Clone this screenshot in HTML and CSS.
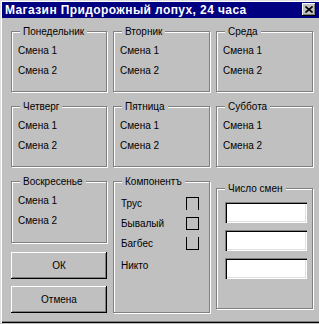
FILE: index.html
```html
<!DOCTYPE html>
<html lang="ru">
<head>
    <meta charset="UTF-8">
    <title>Магазин Придорожный лопух, 24 часа</title>
    <link rel="stylesheet" href="styles.css">
</head>
<body>
    <div class="window">
        <div class="titlebar">
            <span class="title">Магазин Придорожный лопух, 24 часа</span>
            <button class="close">
                <svg width="8" height="7" viewBox="0 0 8 7">
                    <path d="M0.5 0.5 L7.5 6.5 M7.5 0.5 L0.5 6.5" stroke="#000" stroke-width="1.6" fill="none"/>
                </svg>
            </button>
        </div>

        <div class="content">
            <div class="group day">
                <span class="caption">Понедельник</span>
                <div class="shift">Смена 1</div>
                <div class="shift">Смена 2</div>
            </div>
            <div class="group day">
                <span class="caption">Вторник</span>
                <div class="shift">Смена 1</div>
                <div class="shift">Смена 2</div>
            </div>
            <div class="group day">
                <span class="caption">Среда</span>
                <div class="shift">Смена 1</div>
                <div class="shift">Смена 2</div>
            </div>

            <div class="group day">
                <span class="caption">Четверг</span>
                <div class="shift">Смена 1</div>
                <div class="shift">Смена 2</div>
            </div>
            <div class="group day">
                <span class="caption">Пятница</span>
                <div class="shift">Смена 1</div>
                <div class="shift">Смена 2</div>
            </div>
            <div class="group day">
                <span class="caption">Суббота</span>
                <div class="shift">Смена 1</div>
                <div class="shift">Смена 2</div>
            </div>

            <div class="left-col">
                <div class="group day">
                    <span class="caption">Воскресенье</span>
                    <div class="shift">Смена 1</div>
                    <div class="shift">Смена 2</div>
                </div>
                <button class="btn ok">ОК</button>
                <button class="btn">Отмена</button>
            </div>

            <div class="group components">
                <span class="caption">Компонентъ</span>
                <div class="comp-row"><span>Трус</span><span class="mark open-bottom"></span></div>
                <div class="comp-row"><span>Бывалый</span><span class="mark"></span></div>
                <div class="comp-row"><span>Багбес</span><span class="mark open-top"></span></div>
                <div class="comp-row"><span>Никто</span></div>
            </div>

            <div class="group counts">
                <span class="caption">Число смен</span>
                <input type="text" class="field">
                <input type="text" class="field">
                <input type="text" class="field">
            </div>
        </div>
    </div>
</body>
</html>
```

FILE: styles.css
```css
body {
    margin: 0;
    background-color: #c0c0c0;
    font-family: "Liberation Sans", Arial, sans-serif;
    font-size: 10px;
    color: #000;
    overflow: hidden;
}

.window {
    width: 322px;
    height: 323px;
    padding: 2px;
    box-sizing: border-box;
    background-color: #c0c0c0;
    box-shadow: inset 1px 1px #dfdfdf, inset 2px 2px #fff, inset -1px -1px #000, inset -2px -2px #808080;
}

.titlebar {
    display: flex;
    justify-content: space-between;
    align-items: flex-start;
    height: 16px;
    background-color: #000080;
    color: #fff;
    padding-left: 3px;
}

.title {
    font-weight: bold;
    font-size: 12px;
    letter-spacing: 0.4px;
    line-height: 16px;
}

.close {
    width: 14px;
    height: 13px;
    margin: 1px 4px 0 0;
    padding: 0;
    border: none;
    background-color: #c0c0c0;
    box-shadow: inset -1px -1px #000, inset 1px 1px #fff, inset -2px -2px #808080;
    display: flex;
    align-items: center;
    justify-content: center;
}

.close svg {
    display: block;
    margin: -1px 0 0 -1px;
}

.content {
    display: grid;
    grid-template-columns: 96px 97px 97px;
    grid-template-rows: 61px 61px auto;
    column-gap: 6px;
    row-gap: 14px;
    padding: 13px 0 0 9px;
}

.group {
    position: relative;
    border: 1px solid #808080;
    box-shadow: inset 1px 1px #fff, 1px 1px #fff;
    box-sizing: border-box;
}

.caption {
    position: absolute;
    top: -7px;
    left: 8px;
    padding: 0 3px;
    line-height: 13px;
    background-color: #c0c0c0;
}

.day {
    height: 61px;
    padding: 9px 0 0 6px;
}

.shift {
    line-height: 20px;
}

.left-col {
    display: flex;
    flex-direction: column;
}

.left-col .day {
    height: 62px;
}

.btn {
    width: 96px;
    height: 27px;
    padding: 0;
    border: none;
    background-color: #c0c0c0;
    font-family: inherit;
    font-size: 10px;
    color: #000;
    box-shadow: inset -1px -1px #000, inset 1px 1px #fff, inset -2px -2px #808080;
    margin-top: 7px;
}

.btn.ok {
    margin-top: 9px;
}

.components {
    height: 132px;
    padding: 11px 10px 0 7px;
}

.comp-row {
    display: flex;
    justify-content: space-between;
    align-items: center;
    height: 20px;
}

.comp-row:last-child {
    margin-top: 2px;
}

.mark {
    width: 13px;
    height: 13px;
    border: 1px solid #000;
    box-sizing: border-box;
}

.mark.open-bottom {
    border-bottom: none;
}

.mark.open-top {
    border-top: none;
}

.counts {
    height: 121px;
    margin-top: 7px;
    padding: 13px 0 0 8px;
    display: flex;
    flex-direction: column;
    gap: 7px;
}

.field {
    width: 82px;
    height: 21px;
    margin: 0;
    padding: 0;
    border: none;
    background-color: #fff;
    box-sizing: border-box;
    box-shadow: inset 1px 1px #808080, inset 2px 2px #000, inset -1px -1px #fff, inset -2px -2px #dfdfdf;
}
```
